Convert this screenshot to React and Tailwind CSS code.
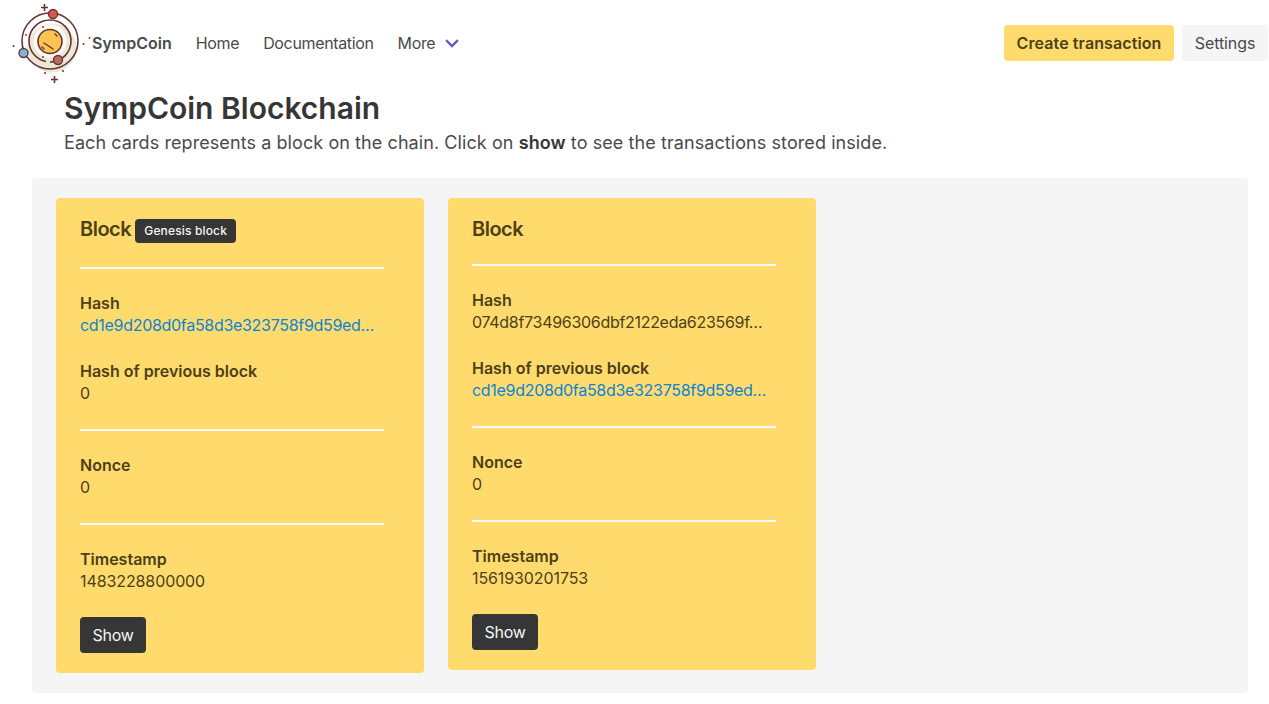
const inter = { fontFamily: "Inter, sans-serif" };

function Logo() {
  const ink = "#6a3434";
  return (
    <svg width="92" height="86" viewBox="0 0 92 86" className="shrink-0">
      <circle cx="52" cy="48" r="24.5" fill="#ece8d8" />
      <circle cx="50" cy="41" r="16.5" fill="#fbfaf5" />
      <circle cx="50" cy="41" r="28" fill="none" stroke={ink} strokeWidth="1.6" />
      <path d="M29 41a21 21 0 1 1 21 21" fill="none" stroke={ink} strokeWidth="1.6" />
      <path d="M46 61.5a21 21 0 0 1-17-20.5" fill="none" stroke={ink} strokeWidth="1.6" />
      <circle cx="50" cy="41.5" r="12" fill="#f9c452" stroke={ink} strokeWidth="1.6" />
      <path d="M44 43l9 6M55 34l2 2M42 47l2 2" stroke={ink} strokeWidth="1.4" strokeLinecap="round" />
      <circle cx="53" cy="14" r="4.5" fill="#dc5750" stroke={ink} strokeWidth="1.4" />
      <circle cx="23.5" cy="53" r="4.5" fill="#7fb3e0" stroke={ink} strokeWidth="1.4" />
      <circle cx="58" cy="60" r="4.5" fill="#b96c5f" stroke={ink} strokeWidth="1.4" />
      <path d="M44.5 4v7M41 7.5h7M54.5 76v7M51 79.5h7" stroke={ink} strokeWidth="1.6" />
      <circle cx="13.5" cy="46" r="1" fill={ink} />
      <circle cx="83.5" cy="44" r="1" fill={ink} />
      <circle cx="89.5" cy="38" r="0.9" fill={ink} />
      <circle cx="45" cy="73" r="1" fill={ink} />
      <circle cx="63" cy="71" r="1" fill={ink} />
      <circle cx="26" cy="35" r="0.9" fill={ink} />
      <circle cx="43" cy="27" r="0.9" fill={ink} />
      <circle cx="43" cy="57" r="0.9" fill={ink} />
    </svg>
  );
}

function Chevron() {
  return (
    <svg width="14" height="10" viewBox="0 0 14 10" className="ml-[10px] mt-[2px]">
      <path d="M2 2l5 5 5-5" fill="none" stroke="#7352c7" strokeWidth="2.4" strokeLinecap="square" />
    </svg>
  );
}

function Field({ label, value, link, hash }) {
  return (
    <div>
      <div className="font-semibold leading-6">{label}</div>
      <div className={"leading-[20px] whitespace-nowrap " + (hash ? "tracking-[-0.3px] " : "tracking-[-0.1px] ") + (link ? "text-[#0a84d8]" : "")}>{value}</div>
    </div>
  );
}

function Divider() {
  return <div className="h-[2px] w-[304px] bg-[#fafafa]" />;
}

function Card({ genesis, hash, prev, prevLink, hashLink, nonce, time }) {
  return (
    <div className="w-[368px] bg-[#ffdb6e] rounded-[4px] px-6 pt-[19px] pb-5 text-[#4d3f18] text-base">
      <div className="flex items-center font-semibold text-xl leading-6 h-6 tracking-[-0.5px]">
        Block
        {genesis && (
          <span className="ml-1 mt-1 h-6 w-[101px] justify-center rounded-[4px] bg-[#363636] text-[#f5f5f5] text-xs font-medium flex items-center tracking-[0.15px]">
            Genesis block
          </span>
        )}
      </div>
      <div className={genesis ? "mt-[26px]" : "mt-[23px]"}><Divider /></div>
      <div className="mt-[22px]"><Field label="Hash" value={hash} link={hashLink} hash /></div>
      <div className="mt-6"><Field label="Hash of previous block" value={prev} link={prevLink} hash={prevLink} /></div>
      <div className="mt-[26px]"><Divider /></div>
      <div className="mt-[22px]"><Field label="Nonce" value={nonce} /></div>
      <div className="mt-[26px]"><Divider /></div>
      <div className="mt-[22px]"><Field label="Timestamp" value={time} /></div>
      <button className="mt-[26px] block h-9 w-[66px] rounded-[4px] bg-[#363636] text-[#f5f5f5] text-base tracking-[-0.3px]">Show</button>
    </div>
  );
}

export default function App() {
  return (
    <div style={inter} className="bg-white text-[#4a4a4a] min-h-[704px]">
      <nav className="flex items-center h-[86px] pr-px pb-[1px]">
        <Logo />
        <span className="font-semibold text-base text-[#4a4a4a]">SympCoin</span>
        <span className="ml-6 text-base tracking-[-0.35px]">Home</span>
        <span className="ml-6 text-base tracking-[-0.35px]">Documentation</span>
        <span className="ml-6 text-base flex items-center tracking-[-0.35px]">More<Chevron /></span>
        <div className="ml-auto flex gap-2">
          <button className="h-9 w-[170px] rounded-[4px] bg-[#ffdb6e] text-[#4d3f18] font-semibold text-base tracking-[0.1px]">Create transaction</button>
          <button className="h-9 w-[86px] rounded-[4px] bg-[#f5f5f5] text-[#4a4a4a] text-base tracking-[-0.1px]">Settings</button>
        </div>
      </nav>
      <div className="pl-16">
        <h1 className="text-3xl font-semibold text-[#363636] leading-[44px]">SympCoin Blockchain</h1>
        <p className="text-lg leading-[24px] mt-[1px] tracking-[0.08px]">
          Each cards represents a block on the chain. Click on <strong className="font-semibold text-[#363636]">show</strong> to see the transactions stored inside.
        </p>
      </div>
      <section className="mt-[23px] ml-8 w-[1216px] bg-[#f5f5f5] rounded-[4px] p-5 pl-6 flex items-start gap-6">
        <Card genesis hash="cd1e9d208d0fa58d3e323758f9d59ed…" hashLink prev="0" nonce="0" time="1483228800000" />
        <Card hash="074d8f73496306dbf2122eda623569f…" prev="cd1e9d208d0fa58d3e323758f9d59ed…" prevLink nonce="0" time="1561930201753" />
      </section>
    </div>
  );
}
